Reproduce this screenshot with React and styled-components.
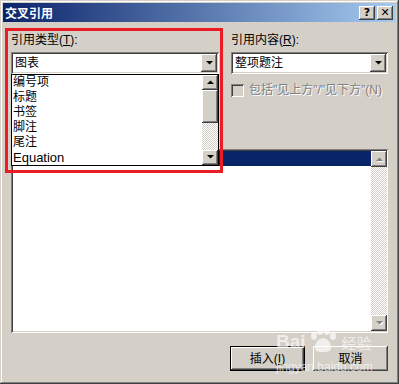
import React from 'react';
import styled, { createGlobalStyle, css } from 'styled-components';

const GlobalStyle = createGlobalStyle`
  html, body { margin: 0; padding: 0; background: #d4d0c8; }
  body {
    font-family: "Liberation Sans", "Noto Sans CJK SC", sans-serif;
    font-size: 12px;
    color: #000;
  }
`;

const raised = css`
  background: #d4d0c8;
  box-shadow: inset -1px -1px #404040, inset 1px 1px #ffffff, inset -2px -2px #808080, inset 2px 2px #d4d0c8;
`;

const sunken = css`
  box-shadow: inset 1px 1px #808080, inset -1px -1px #ffffff, inset 2px 2px #404040, inset -2px -2px #d4d0c8;
`;

const checkered = css`
  background-color: #ffffff;
  background-image: repeating-conic-gradient(#d4d0c8 0 25%, #ffffff 0 50%);
  background-size: 2px 2px;
`;

const Window = styled.div`
  position: relative;
  width: 399px;
  height: 384px;
  box-sizing: border-box;
  padding: 3px;
  background: #d4d0c8;
  box-shadow: inset -1px -1px #404040, inset 1px 1px #d4d0c8, inset -2px -2px #808080, inset 2px 2px #ffffff;
  display: flex;
  flex-direction: column;
  overflow: hidden;
`;

const TitleBar = styled.div`
  height: 19px;
  display: flex;
  align-items: center;
  padding: 0 3px 0 2px;
  background: linear-gradient(to right, #0a246a, #a6caf0);
`;

const TitleText = styled.div`
  flex: 1;
  color: #fff;
  font-family: "Noto Sans CJK SC", sans-serif;
  font-weight: 700;
  font-size: 12px;
  line-height: 14px;
`;

const TitleButton = styled.div`
  ${raised};
  width: 16px;
  height: 14px;
  margin-left: 2px;
  display: flex;
  align-items: center;
  justify-content: center;
  font-family: "DejaVu Sans", sans-serif;
  font-weight: 700;
  font-size: 11px;
  line-height: 1;
`;

const Body = styled.div`
  padding: 11px 8px 0 8px;
  display: flex;
  flex-direction: column;
`;

const TopGrid = styled.div`
  display: grid;
  grid-template-columns: 208px 157px;
  column-gap: 12px;
`;

const Column = styled.div`
  display: flex;
  flex-direction: column;
`;

const Label = styled.div`
  height: 14px;
  line-height: 14px;
  margin-bottom: ${p => (p.$inline ? 0 : 5)}px;
  white-space: nowrap;
  color: ${p => (p.$disabled ? '#808080' : '#000')};
  text-shadow: ${p => (p.$disabled ? '1px 1px #ffffff' : 'none')};
`;

const Combo = styled.div`
  ${sunken};
  height: 22px;
  box-sizing: border-box;
  padding: 2px;
  background: #fff;
  display: flex;
  align-items: center;
`;

const ComboText = styled.div`
  flex: 1;
  padding-left: 2px;
  line-height: 18px;
`;

const ArrowButton = styled.div`
  ${raised};
  width: 16px;
  height: ${p => p.$h || 16}px;
  flex: none;
  display: flex;
  align-items: center;
  justify-content: center;
`;

const Thumb = styled.div`
  ${raised};
  height: ${p => p.$h}px;
  flex: none;
`;

const Track = styled.div`
  ${checkered};
  flex: 1;
`;

const ScrollBar = styled.div`
  width: 16px;
  flex: none;
  display: flex;
  flex-direction: column;
`;

const CheckRow = styled.div`
  margin-top: 9px;
  display: flex;
  align-items: center;
  gap: 5px;
  height: 14px;
`;

const CheckBox = styled.div`
  ${sunken};
  width: 13px;
  height: 13px;
  background: #d4d0c8;
  flex: none;
`;

const ListBox = styled.div`
  ${sunken};
  margin-top: 52px;
  height: 184px;
  box-sizing: border-box;
  padding: 2px 1px 2px 2px;
  background: #fff;
  display: flex;
`;

const Rows = styled.div`
  flex: 1;
`;

const Row = styled.div`
  height: 15px;
  background: ${p => (p.$selected ? '#0a246a' : 'transparent')};
`;

const ButtonRow = styled.div`
  margin-top: 13px;
  display: flex;
  justify-content: flex-end;
  gap: 8px;
`;

const PushButton = styled.div`
  width: 75px;
  height: 25px;
  background: #d4d0c8;
  display: flex;
  align-items: center;
  justify-content: center;
  line-height: 14px;
  box-shadow: ${p =>
    p.$default
      ? 'inset 0 0 0 1px #000, inset -2px -2px #404040, inset 2px 2px #ffffff, inset -3px -3px #808080'
      : 'inset -1px -1px #404040, inset 1px 1px #ffffff, inset -2px -2px #808080'};
`;

const DropList = styled.div`
  position: absolute;
  left: 11px;
  top: 74px;
  width: 208px;
  height: 92px;
  box-sizing: border-box;
  border: 1px solid #000;
  background: #fff;
  display: flex;
  z-index: 2;
`;

const DropItems = styled.div`
  flex: 1;
`;

const DropItem = styled.div`
  height: 15px;
  line-height: 15px;
  padding-left: 1px;
  font-size: ${p => (p.$latin ? '13px' : '12px')};
`;

const RedMark = styled.div`
  position: absolute;
  left: 5px;
  top: 28px;
  width: 218px;
  height: 145px;
  box-sizing: border-box;
  border: 3px solid #ed1c24;
  pointer-events: none;
  z-index: 3;
`;

const Watermark = styled.div`
  position: absolute;
  left: 276px;
  top: 328px;
  display: flex;
  flex-direction: column;
  align-items: flex-start;
  color: rgba(255, 255, 255, 0.65);
  pointer-events: none;
  z-index: 4;
`;

const MarkLine = styled.div`
  height: 24px;
  display: flex;
  align-items: flex-end;
  gap: 2px;
`;

const MarkBig = styled.span`
  font-family: "Liberation Sans", sans-serif;
  font-weight: 700;
  font-size: 19px;
  line-height: 20px;
`;

const MarkCn = styled.span`
  font-family: "Noto Sans CJK SC", sans-serif;
  font-size: 15px;
  line-height: 18px;
  margin-left: 2px;
`;

const MarkUrl = styled.div`
  font-family: "Liberation Sans", sans-serif;
  font-size: 12px;
  line-height: 12px;
  margin-top: 9px;
`;

const U = styled.span`
  text-decoration: underline;
`;

const Arrow = ({ dir = 'down', color = '#000', shadow }) => (
  <svg width="7" height="5" viewBox="0 0 7 5" style={{ overflow: 'visible' }}>
    {shadow && (
      <polygon
        points={dir === 'down' ? '1,1 8,1 4.5,4.5' : '1,5 8,5 4.5,1.5'}
        fill="#fff"
      />
    )}
    <polygon points={dir === 'down' ? '0,0 7,0 3.5,3.5' : '0,4 7,4 3.5,0.5'} fill={color} />
  </svg>
);

const Paw = () => (
  <svg width="30" height="24" viewBox="0 0 30 24">
    <g fill="rgba(255,255,255,0.65)">
      <ellipse cx="6" cy="8" rx="3" ry="4" />
      <ellipse cx="12" cy="3.5" rx="3" ry="3.5" />
      <ellipse cx="19" cy="3.5" rx="3" ry="3.5" />
      <ellipse cx="25" cy="8" rx="3" ry="4" />
      <path d="M7 20 C7 14 11 10 15 10 C19 10 23 14 23 20 C23 23 20 24 15 24 C10 24 7 23 7 20 Z" />
    </g>
  </svg>
);

export default function App() {
  return (
    <>
      <GlobalStyle />
      <Window>
        <TitleBar>
          <TitleText>交叉引用</TitleText>
          <TitleButton>?</TitleButton>
          <TitleButton>✕</TitleButton>
        </TitleBar>
        <Body>
          <TopGrid>
            <Column>
              <Label>引用类型(<U>T</U>):</Label>
              <Combo>
                <ComboText>图表</ComboText>
                <ArrowButton $h={18}><Arrow /></ArrowButton>
              </Combo>
            </Column>
            <Column>
              <Label>引用内容(<U>R</U>):</Label>
              <Combo>
                <ComboText>整项题注</ComboText>
                <ArrowButton $h={18}><Arrow /></ArrowButton>
              </Combo>
              <CheckRow>
                <CheckBox />
                <Label $disabled $inline>包括"见上方"/"见下方"(N)</Label>
              </CheckRow>
            </Column>
          </TopGrid>
          <ListBox>
            <Rows>
              <Row $selected />
            </Rows>
            <ScrollBar>
              <ArrowButton><Arrow dir="up" color="#808080" shadow /></ArrowButton>
              <Track />
              <ArrowButton><Arrow color="#808080" shadow /></ArrowButton>
            </ScrollBar>
          </ListBox>
          <ButtonRow>
            <PushButton $default>插入(<U>I</U>)</PushButton>
            <PushButton>取消</PushButton>
          </ButtonRow>
        </Body>

        <DropList>
          <DropItems>
            <DropItem>编号项</DropItem>
            <DropItem>标题</DropItem>
            <DropItem>书签</DropItem>
            <DropItem>脚注</DropItem>
            <DropItem>尾注</DropItem>
            <DropItem $latin>Equation</DropItem>
          </DropItems>
          <ScrollBar>
            <ArrowButton $h={15}><Arrow dir="up" /></ArrowButton>
            <Thumb $h={33} />
            <Track />
            <ArrowButton $h={15}><Arrow /></ArrowButton>
          </ScrollBar>
        </DropList>

        <RedMark />

        <Watermark>
          <MarkLine>
            <MarkBig>Bai</MarkBig>
            <Paw />
            <MarkCn>经验</MarkCn>
          </MarkLine>
          <MarkUrl>jingyan.baidu.com</MarkUrl>
        </Watermark>
      </Window>
    </>
  );
}
